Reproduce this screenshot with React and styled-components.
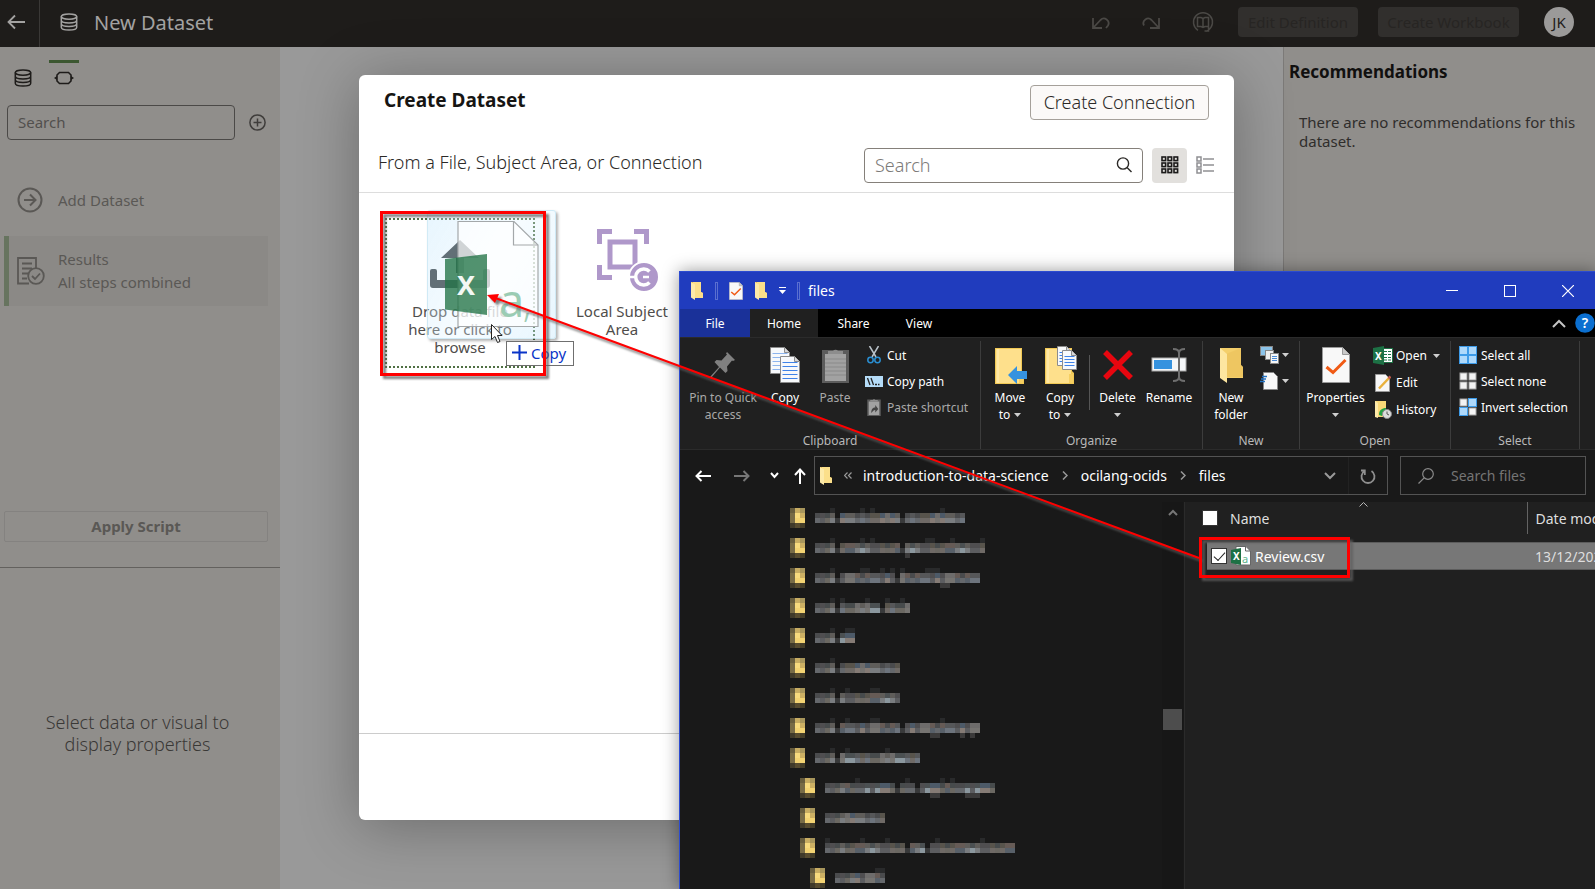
import React from 'react';
import styled, { createGlobalStyle, css } from 'styled-components';

const GlobalStyle = createGlobalStyle`
  *, *::before, *::after { box-sizing: border-box; }
  html, body, #root { height: 100%; margin: 0; }
  body {
    overflow: hidden;
    background: #999999;
    font-family: "Noto Sans", "Open Sans", sans-serif;
    font-weight: 400;
    font-size: 15px;
  }
  button, input { font: inherit; color: inherit; margin: 0; }
  button { padding: 0; border: 0; background: none; cursor: pointer; }
  svg { display: block; flex: none; }
  h1, h2, p, ul { margin: 0; padding: 0; }
`;

/* ---------- application shell ---------- */

const Screen = styled.div`
  position: relative;
  height: 100vh;
  display: flex;
  flex-direction: column;
  overflow: hidden;
`;

const TopBar = styled.header`
  height: 47px;
  flex: none;
  display: flex;
  align-items: center;
  padding-right: 21px;
  padding-bottom: 3px;
  background: #1e1c1a;
  color: #a3a2a1;
`;

const BackButton = styled.button`
  width: 40px;
  height: 47px;
  margin-bottom: -3px;
  padding: 0 0 3px 7px;
  border-right: 1px solid #3a3836;
`;

const TitleIcon = styled.span`
  padding-left: 20px;
`;

const PageTitle = styled.h1`
  flex: 1;
  margin-left: 16px;
  font-size: 20px;
  font-weight: 400;
`;

const TopTools = styled.div`
  display: flex;
  align-items: center;
  gap: 32px;
  margin-right: 24px;
  color: #4b4946;
`;

const TopButton = styled.button`
  width: ${(p) => p.$width}px;
  height: 30px;
  margin-right: ${(p) => p.$after}px;
  border-radius: 4px;
  background: #312f2d;
  color: #272523;
`;

const Avatar = styled.button`
  width: 30px;
  height: 30px;
  border-radius: 50%;
  background: #9b9a99;
  color: #1e1c1a;
`;

const Workspace = styled.div`
  flex: 1;
  display: flex;
  justify-content: space-between;
  min-height: 0;
`;

const LeftPanel = styled.aside`
  width: 280px;
  display: flex;
  flex-direction: column;
  background: #908e8b;
  color: #5a5855;
`;

const ScriptPane = styled.section`
  height: 521px;
  display: flex;
  flex-direction: column;
  border-bottom: 1px solid #63615e;
`;

const PanelTabs = styled.div`
  display: flex;
  gap: 11px;
  height: 48px;
  padding: 13px 0 0 8px;
  color: #1e1c1a;
`;

const PanelTab = styled.button`
  width: 30px;
  height: 35px;
  display: flex;
  align-items: flex-start;
  justify-content: center;
  padding-top: 6px;
  border-top: 3px solid ${(p) => (p.$active ? '#3c5731' : 'transparent')};
`;

const PanelSearch = styled.div`
  display: flex;
  align-items: center;
  gap: 14px;
  padding: 10px 7px 0;
  color: #3f3d3b;
`;

const PanelInput = styled.input`
  width: 228px;
  height: 35px;
  padding: 0 10px 2px;
  border: 1px solid #4b4947;
  border-radius: 4px;
  background: transparent;
  outline: 0;
  &::placeholder { color: #52504e; opacity: 1; }
`;

const StepList = styled.div`
  flex: 1;
  display: flex;
  flex-direction: column;
  gap: 12px;
  padding: 36px 12px 0 4px;
`;

const Step = styled.button`
  display: flex;
  align-items: center;
  width: 100%;
  height: ${(p) => (p.$active ? 70 : 48)}px;
  border-left: 5px solid ${(p) => (p.$active ? '#67745f' : 'transparent')};
  background: ${(p) => (p.$active ? '#8b8986' : 'transparent')};
  text-align: left;
  line-height: 23px;
`;

const StepIcon = styled.span`
  width: 49px;
  padding-left: 8px;
`;

const ApplyButton = styled.button`
  height: 31px;
  margin: 0 12px 25px 4px;
  padding-bottom: 2px;
  border: 1px solid #848280;
  border-radius: 2px;
  font-weight: 700;
`;

const EmptyProperties = styled.section`
  flex: 1;
  padding: 143px 35px 0 30px;
  color: #3a3836;
  font-size: 18px;
  font-weight: 300;
  line-height: 22px;
  text-align: center;
`;

const RightPanel = styled.aside`
  width: 312px;
  padding: 12px 16px 0 5px;
  border-left: 1px solid #7c7a78;
  background: #908e8b;
`;

const PanelHeading = styled.h2`
  font-size: 17px;
  font-weight: 700;
  line-height: 26px;
  color: #11100f;
`;

const PanelText = styled.p`
  margin: 28px 0 0 10px;
  line-height: 19px;
  color: #2f2d2b;
`;

/* ---------- create dataset dialog ---------- */

const Overlay = styled.div`
  position: absolute;
  inset: 0;
  display: flex;
  padding: 75px 361px 69px 359px;
`;

const Dialog = styled.section`
  flex: 1;
  min-width: 0;
  display: flex;
  flex-direction: column;
  border-radius: 6px;
  background: #ffffff;
  color: #2b2927;
  box-shadow: 0 6px 60px rgba(0, 0, 0, 0.3);
`;

const DialogHeader = styled.header`
  display: flex;
  justify-content: space-between;
  padding: 10px 25px 0;
`;

const DialogTitle = styled.h2`
  font-size: 19px;
  font-weight: 700;
  line-height: 30px;
  color: #161513;
`;

const ConnectionButton = styled.button`
  width: 179px;
  height: 35px;
  padding-bottom: 2px;
  border: 1px solid #a5a09a;
  border-radius: 4px;
  background: #fbf9f8;
  font-size: 18px;
  font-weight: 300;
`;

const DialogBar = styled.div`
  display: flex;
  align-items: center;
  height: 73px;
  padding: 18px 12px 0 19px;
  border-bottom: 1px solid #dddddd;
  font-size: 18px;
  font-weight: 300;
`;

const DialogLabel = styled.p`
  flex: 1;
  padding-bottom: 6px;
`;

const SearchBox = styled.label`
  width: 279px;
  height: 35px;
  display: flex;
  align-items: center;
  margin-right: 9px;
  padding: 0 10px;
  border: 1px solid #85807a;
  border-radius: 4px;
`;

const BareInput = styled.input`
  flex: 1;
  min-width: 0;
  border: 0;
  padding: 0;
  outline: 0;
  background: transparent;
  &::placeholder { color: ${(p) => p.$hint}; opacity: 1; }
`;

const ViewButton = styled.button`
  width: 35px;
  height: 35px;
  display: flex;
  align-items: center;
  justify-content: center;
  border-radius: 4px;
  background: ${(p) => (p.$active ? '#e2e0dd' : 'transparent')};
`;

const Sources = styled.div`
  flex: 1;
  display: flex;
  align-items: flex-start;
  gap: 12px;
  padding: 25px 26px;
`;

const SourceTile = styled.button`
  width: 150px;
  height: 150px;
  display: flex;
  flex-direction: column;
  align-items: center;
  padding: 9px 18px 0;
  border: 2px ${(p) => (p.$drop ? 'dotted #4f7043' : 'solid transparent')};
  line-height: 18px;
  color: #4f4d4b;
`;

const TileIcon = styled.span`
  height: 73px;
`;

const DialogFooter = styled.footer`
  height: 87px;
  border-top: 1px solid #cccccc;
`;

/* ---------- file explorer window ---------- */

/* The window reaches a little past the right edge of the screen. */
const Explorer = styled.section`
  position: absolute;
  inset: 271px -2px 0 679px;
  display: flex;
  flex-direction: column;
  border: solid #2c4bd0;
  border-width: 1px 0 0 1px;
  background: #191919;
  color: #ffffff;
  font-size: 12px;
  box-shadow: 0 0 16px rgba(0, 0, 0, 0.4);
`;

const TitleBar = styled.header`
  height: 37px;
  display: flex;
  align-items: center;
  padding-left: 10px;
  background: #203cbe;
  font-size: 14px;
`;

const QuickIcons = styled.div`
  display: flex;
  align-items: center;
  gap: 11px;
  margin-right: 8px;
`;

const QuickRule = styled.span`
  width: 3px;
  height: 18px;
  border: 1px solid #5a6fd0;
`;

const WindowTitle = styled.span`
  flex: 1;
`;

const WindowButton = styled.button`
  width: 58px;
  height: 37px;
  display: flex;
  align-items: center;
  justify-content: center;
`;

const TabBar = styled.nav`
  height: 28px;
  display: flex;
  align-items: stretch;
  background: #000000;
`;

const RibbonTab = styled.button`
  width: ${(p) => p.$width}px;
  background: ${(p) => p.$fill || 'transparent'};
`;

const TabTools = styled.div`
  flex: 1;
  display: flex;
  align-items: center;
  justify-content: flex-end;
  gap: 9px;
  padding-right: 2px;
`;

const Ribbon = styled.div`
  height: 113px;
  display: flex;
  padding-top: 3px;
  border-top: 1px solid #2b2b2b;
  border-bottom: 1px solid #2b2b2b;
  background: #202020;
`;

const RibbonGroup = styled.section`
  width: ${(p) => p.$width}px;
  display: flex;
  flex-direction: column;
  border-right: 1px solid #3c3c3c;
`;

const GroupTools = styled.div`
  height: 92px;
  display: flex;
  align-items: flex-start;
  padding-left: ${(p) => p.$inset}px;
`;

const GroupName = styled.span`
  text-align: center;
  line-height: 16px;
  color: #b9b9b9;
`;

const BigTool = styled.button`
  width: ${(p) => p.$width}px;
  display: flex;
  flex-direction: column;
  align-items: center;
  gap: 4px;
  padding-top: 4px;
  line-height: 17px;
  white-space: nowrap;
  color: ${(p) => (p.$dim ? '#a9a9a9' : '#ffffff')};
`;

const BigIcon = styled.span`
  height: 40px;
  display: flex;
  align-items: center;
`;

const ToolLine = styled.span`
  display: flex;
  align-items: center;
  justify-content: center;
  gap: 4px;
  min-height: 17px;
`;

const ToolRule = styled.span`
  width: 1px;
  height: 55px;
  margin: 14px 1px 0 4px;
  background: #555555;
`;

const SmallTools = styled.div`
  display: flex;
  flex-direction: column;
  padding-top: 1px;
`;

const SmallTool = styled.button`
  height: ${(p) => p.$height || 26}px;
  display: flex;
  align-items: center;
  gap: 3px;
  padding-left: 3px;
  white-space: nowrap;
  color: ${(p) => (p.$dim ? '#a9a9a9' : '#ffffff')};
`;

const SmallIcon = styled.span`
  width: 20px;
  display: flex;
  justify-content: center;
`;

const CaretGap = styled.span`
  padding-left: 3px;
`;

const AddressRow = styled.div`
  height: 52px;
  display: flex;
  align-items: center;
  padding: 0 11px 1px 15px;
  font-size: 14px;
`;

const NavButtons = styled.div`
  width: 119px;
  display: flex;
  align-items: center;
  gap: 20px;
  padding-right: 10px;
`;

const NavPair = styled.div`
  display: flex;
  align-items: center;
  gap: ${(p) => p.$gap}px;
`;

const AddressBox = styled.div`
  flex: 1;
  min-width: 0;
  height: 39px;
  display: flex;
  align-items: center;
  margin-right: 12px;
  padding-left: 4px;
  border: 1px solid #535353;
`;

const Crumbs = styled.nav`
  flex: 1;
  min-width: 0;
  display: flex;
  align-items: center;
  gap: 11px;
`;

const CrumbMark = styled.span`
  padding: 0 2px;
`;

const RefreshButton = styled.button`
  width: 39px;
  height: 37px;
  display: flex;
  align-items: center;
  justify-content: center;
  margin-left: 12px;
  border-left: 1px solid #222222;
`;

const FileSearch = styled.label`
  width: 186px;
  height: 39px;
  display: flex;
  align-items: center;
  gap: 17px;
  padding: 0 17px;
  border: 1px solid #535353;
`;

const ExplorerBody = styled.div`
  flex: 1;
  min-height: 0;
  display: flex;
`;

const TreePane = styled.div`
  width: 505px;
  display: flex;
  border-right: 1px solid #2b2b2b;
`;

const Tree = styled.ul`
  flex: 1;
  min-width: 0;
  overflow: hidden;
  padding: 6px 0 0 110px;
  list-style: none;
`;

const TreeItem = styled.li`
  height: 30px;
  display: flex;
  gap: 10px;
  padding-left: ${(p) => p.$depth * 10}px;
`;

const ScrollTrack = styled.div`
  width: 21px;
  display: flex;
  flex-direction: column;
  align-items: center;
  margin-right: 1px;
  padding-top: 7px;
  background: #171717;
`;

const ScrollThumb = styled.div`
  width: 19px;
  height: 21px;
  margin-top: 193px;
  background: #4d4d4d;
`;

const FilesPane = styled.div`
  flex: 1;
  min-width: 0;
  overflow: hidden;
  padding-left: 16px;
  background: #202020;
`;

const FileTable = styled.table`
  width: 520px;
  table-layout: fixed;
  border-collapse: collapse;
  font-size: 14px;
`;

const HeadCell = styled.th`
  width: ${(p) => p.$width}px;
  height: 32px;
  padding: 0 0 0 ${(p) => p.$indent}px;
  border-right: 1px solid #636363;
  font-weight: 400;
  text-align: left;
  color: #dedede;
`;

const HeadLine = styled.div`
  height: 32px;
  display: flex;
  align-items: center;
  gap: 12px;
`;

const SortMark = styled.span`
  align-self: flex-start;
  margin-left: 78px;
`;

const FileCell = styled.td`
  padding: 8px 0 0 ${(p) => p.$indent || 0}px;
`;

const FileLine = styled.div`
  height: 28px;
  display: flex;
  align-items: center;
  gap: 4px;
  padding-left: ${(p) => p.$pad}px;
  border: solid #5c5c5c;
  border-width: 1px 0;
  background: #777777;
  color: ${(p) => p.$ink};
`;

const Check = styled.input`
  appearance: none;
  width: 16px;
  height: 16px;
  flex: none;
  border: 1px solid #333333;
  background: #ffffff;
  ${(p) =>
    p.checked &&
    css`
      display: grid;
      place-items: center;
      &::after {
        content: '';
        width: 11px;
        height: 6px;
        margin-top: -3px;
        border: solid #222222;
        border-width: 0 0 1px 1px;
        transform: rotate(-48deg);
      }
    `}
`;

/* ---------- dragged file and annotations ---------- */

const DragGhost = styled.div`
  position: absolute;
  left: 427px;
  top: 210px;
  width: 129px;
  height: 129px;
  border: 1px solid rgba(190, 225, 240, 0.6);
  border-radius: 3px;
  background: linear-gradient(120deg, rgba(188, 228, 252, 0.35), rgba(225, 244, 255, 0.3) 50%, rgba(188, 228, 252, 0.35));
  box-shadow: 2px 2px 3px rgba(0, 0, 0, 0.3);
`;

const DropHint = styled.div`
  position: absolute;
  left: 506px;
  top: 341px;
  width: 68px;
  height: 25px;
  display: flex;
  align-items: center;
  gap: 4px;
  padding: 0 0 2px 5px;
  border: 1px solid #6f6f6f;
  background: #ffffff;
  color: #0a35c8;
`;

const Pointer = styled.svg`
  position: absolute;
  left: 490px;
  top: 323px;
`;

const Annotations = styled.svg`
  position: absolute;
  left: 0;
  top: 0;
  pointer-events: none;
  filter: drop-shadow(3px 3px 1px rgba(95, 95, 95, 0.8));
`;

/* ---------- icons ---------- */

const Icon = ({ w = 16, h, box, children, ...rest }) => (
  <svg
    width={w}
    height={h || w}
    viewBox={box || `0 0 ${w} ${h || w}`}
    fill="none"
    stroke="currentColor"
    strokeWidth="1.5"
    aria-hidden="true"
    {...rest}
  >
    {children}
  </svg>
);

const DatabaseIcon = () => (
  <Icon w={18}>
    <ellipse cx="9" cy="3.6" rx="7.7" ry="2.7" />
    <path d="M1.3 3.6v10.6c0 1.6 3.4 2.8 7.7 2.8s7.7-1.2 7.7-2.8V3.6M1.3 7.2c0 1.6 3.4 2.7 7.7 2.7s7.7-1.1 7.7-2.7M1.3 10.8c0 1.6 3.4 2.7 7.7 2.7s7.7-1.1 7.7-2.7" />
  </Icon>
);

const Caret = () => (
  <Icon w={7} h={4} stroke="none" fill="#cfcfcf">
    <path d="M0 0h7L3.5 4z" />
  </Icon>
);

const Chevron = () => (
  <CrumbMark>
    <Icon w={6} h={9} stroke="#9a9a9a"><path d="M1 .5l4 4-4 4" /></Icon>
  </CrumbMark>
);

const FolderIcon = ({ w = 14, h = 18 }) => (
  <Icon w={w} h={h} box="0 0 14 18" stroke="none">
    <path d="M1 0h10v10l2 1v5H3z" fill="#e9bf5a" />
    <path d="M3 0h8v10l2 1v5H4z" fill="#fbdf8a" />
    <path d="M1 0l4 2.6V18l-4-2.5z" fill="#fdeaa9" />
  </Icon>
);

const NewFolderIcon = () => (
  <Icon w={26} h={36} stroke="none">
    <path d="M2 1h21v17l2 2v11H8z" fill="#f4cf6b" />
    <path d="M8 7l15-6v17l2 2v10H8z" fill="#e9c05a" opacity=".55" />
    <path d="M2 1l7 6v29l-7-5z" fill="#fde6a0" />
  </Icon>
);

const BigFolder = ({ children }) => (
  <Icon w={36} h={38} stroke="none">
    <path d="M3 2h27v23l2 2v11H3z" fill="#f1c955" />
    <path d="M4 3h25v34H4z" fill="#fee08c" />
    <path d="M27 28h4v9h-4z" fill="#f6cf62" />
    <path d="M6 3v34" stroke="#ffeebb" strokeWidth="1" />
    {children}
  </Icon>
);

const DocLines = ({ x, y, w, h, gap = 4, tone = '#3f83e8' }) => {
  const rows = [];
  for (let i = y + 6; i < y + h - 2; i += gap) rows.push(i);
  return (
    <g>
      <path
        d={`M${x + 0.5} ${y + 0.5}h${w - 6}l5 5v${h - 6}h-${w - 1}z`}
        fill="#f7f9fb"
        stroke="#8c8c8c"
        strokeWidth="1"
      />
      <path d={`M${x + w - 5.5} ${y + 0.5}v5h5`} fill="#d7d7d7" stroke="#8c8c8c" strokeWidth="1" />
      {rows.map((r) => (
        <path key={r} d={`M${x + 2.5} ${r + 0.5}h${w - 5}`} stroke={tone} strokeWidth="1" />
      ))}
    </g>
  );
};

const CheckPage = ({ w = 28, h = 36 }) => (
  <Icon w={w} h={h} box="0 0 28 36">
    <path d="M.5.5h20l7 7v28H.5z" fill="#f8f8f8" stroke="#999" strokeWidth="1" />
    <path d="M20.5.5v7h7" fill="#c9c9c9" stroke="#999" strokeWidth="1" />
    <path d="M4.5 20l6.5 5.5L23.5 13" stroke="#f05a14" strokeWidth="3" />
  </Icon>
);

const Clipboard = ({ w, h, children }) => (
  <Icon w={w} h={h} box="0 0 27 36" stroke="none">
    <rect x="0" y="3" width="27" height="33" fill="#5c5c5c" />
    <rect x="3" y="7" width="21" height="27" fill="#a2a2a2" />
    <path d="M6 7V4h5a3 3 0 0 1 5 0h5v3z" fill="#8d8d8d" />
    {children || <path d="M3 12h21M3 16h21M3 20h21M3 24h21M3 28h21" stroke="#8a8a8a" strokeWidth="1" />}
  </Icon>
);

const SelectIcon = ({ cells }) => (
  <Icon w={18} stroke="none">
    {cells.map((on, i) => {
      const x = (i % 2) * 9;
      const y = i > 1 ? 9 : 0;
      return (
        <g key={i}>
          {on === 1 && <rect x={x} y={y} width="9" height="9" fill="#3d9be8" />}
          <rect
            x={x + 1}
            y={y + 1}
            width="7"
            height="7"
            fill={on ? '#aed9fb' : '#f3f3f3'}
            stroke={on ? 'none' : '#a5a5a5'}
            strokeWidth="1"
          />
        </g>
      );
    })}
  </Icon>
);

const CsvIcon = () => (
  <Icon w={20} stroke="none">
    <path d="M5 .5h10l4.500 4.500v14H5z" fill="#fff" stroke="#666" strokeWidth="1" />
    <path d="M14.500.5V5H19" fill="none" stroke="#666" strokeWidth="1" />
    <text x="11" y="17" fontSize="11" fontWeight="400" fill="#5db58c">a</text>
    <path d="M0 4l10-2v17L0 17z" fill="#1d7145" />
    <text x="2" y="14" fontSize="10" fontWeight="700" fill="#fff">X</text>
  </Icon>
);

/* ---------- pixelated folder names in the tree ---------- */

const folderCells = [
  ['#655b3d', '#c8ad63', '#a8965c'],
  ['#786b46', '#f7da7e', '#ccb063'],
  ['#786b46', '#f3d373', '#f3d373'],
  ['#403a2a', '#574b2f', '#443d29'],
];

const upperTones = ['#4a4b4d', '#4f4e50', '#474b4c', '#5f5d5a', '#565759', '#4d5a68', '#665b56', '#4b5052', '#58544c', '#6e6c6b'];
const lowerTones = ['#65686c', '#5c5d60', '#6b6862', '#7a7d80', '#6d747d', '#857b75', '#586069', '#8b979e', '#6f6a66', '#767471'];

const treeRows = [
  { depth: 0, length: 30, up: [3, 9, 11, 25], down: [], gap: [4, 17] },
  { depth: 0, length: 34, up: [3, 9, 11, 22, 23, 27, 33], down: [18], gap: [4, 17] },
  { depth: 0, length: 33, up: [3, 9, 10, 13, 15, 17, 22, 23, 24], down: [25, 26], gap: [4, 16] },
  { depth: 0, length: 19, up: [3, 5, 10, 14, 17], down: [], gap: [4, 13] },
  { depth: 0, length: 8, up: [3, 6, 7], down: [], gap: [4] },
  { depth: 0, length: 17, up: [3], down: [], gap: [4] },
  { depth: 0, length: 17, up: [3, 6, 11, 12], down: [], gap: [4] },
  { depth: 0, length: 33, up: [3, 6, 11, 12, 25], down: [23, 24, 29, 31], gap: [4, 17] },
  { depth: 0, length: 21, up: [3, 6, 14], down: [], gap: [4] },
  { depth: 1, length: 34, up: [6, 16, 23, 25], down: [21, 22, 28, 29, 30], gap: [14, 18] },
  { depth: 1, length: 12, up: [], down: [], gap: [] },
  { depth: 1, length: 38, up: [0, 7, 12, 22, 31], down: [], gap: [16, 20] },
  { depth: 2, length: 10, up: [8, 9], down: [], gap: [] },
];

const PixelFolder = () => (
  <Icon w={15} h={20} stroke="none" shapeRendering="crispEdges">
    {folderCells.map((row, y) =>
      row.map((fill, x) => <rect key={`${x}-${y}`} x={x * 5} y={y * 5} width="5" height="5" fill={fill} />)
    )}
  </Icon>
);

const PixelName = ({ row, seed }) => {
  const cells = [];
  const put = (x, y, fill) =>
    cells.push(<rect key={`${x}-${y}`} x={x * 5} y={y * 5} width="5" height="5" fill={fill} />);
  for (let x = 0; x < row.length; x += 1) {
    const mix = x < 4 ? x : (x * 7 + seed * 3 + ((x * x) % 5)) % 10;
    if (row.gap.includes(x)) {
      put(x, 2, '#38393a');
    } else {
      put(x, 1, upperTones[mix]);
      put(x, 2, lowerTones[mix]);
    }
  }
  row.up.forEach((x) => put(x, 0, '#292a2b'));
  row.down.forEach((x) => put(x, 3, '#3b3a3a'));
  return (
    <Icon w={row.length * 5} h={20} stroke="none" shapeRendering="crispEdges">
      {cells}
    </Icon>
  );
};

/* ---------- sections ---------- */

const TopHeader = () => (
  <TopBar>
    <BackButton aria-label="Back">
      <Icon w={18} strokeWidth="1.8"><path d="M18 9H1.5M8 2.5L1.5 9 8 15.5" /></Icon>
    </BackButton>
    <TitleIcon><DatabaseIcon /></TitleIcon>
    <PageTitle>New Dataset</PageTitle>
    <TopTools>
      <button aria-label="Undo">
        <Icon w={18} strokeWidth="1.8"><path d="M1 5v10h9M1.500 14.500L8.500 7a4.700 4.700 0 0 1 7.500 5.500l-2 2.500" /></Icon>
      </button>
      <button aria-label="Redo">
        <Icon w={18} strokeWidth="1.8"><path d="M17 5v10H8M16.500 14.500L9.500 7a4.700 4.700 0 0 0-7.500 5.500" /></Icon>
      </button>
      <button aria-label="Data dictionary">
        <Icon w={22}>
          <path d="M6 19.300A9.500 9.500 0 1 1 16 19.300l-2 1M16.500 16v4h-4" />
          <path d="M5.500 6.500H9l2 1 2-1h3.500v9H13l-2 1-2-1H5.500zM11 7.500v9" />
        </Icon>
      </button>
    </TopTools>
    <TopButton $width={120} $after={20} disabled>Edit Definition</TopButton>
    <TopButton $width={141} $after={25} disabled>Create Workbook</TopButton>
    <Avatar>JK</Avatar>
  </TopBar>
);

const SideBar = () => (
  <LeftPanel>
    <ScriptPane>
      <PanelTabs>
        <PanelTab aria-label="Data"><DatabaseIcon /></PanelTab>
        <PanelTab aria-label="Steps" $active>
          <Icon w={20} h={18}>
            <path d="M5.500 3.500h9l2.500 2.500v6l-2.500 2.500h-9L3 12V6z" strokeWidth="1.600" />
            <path d="M0 9l3-2v4zM20 9l-3-2v4z" fill="currentColor" stroke="none" />
          </Icon>
        </PanelTab>
      </PanelTabs>
      <PanelSearch>
        <PanelInput type="text" placeholder="Search" aria-label="Search steps" />
        <button aria-label="Add step">
          <Icon w={17}><circle cx="8.500" cy="8.500" r="7.600" /><path d="M8.500 4.500v8M4.500 8.500h8" /></Icon>
        </button>
      </PanelSearch>
      <StepList>
        <Step>
          <StepIcon>
            <Icon w={26} strokeWidth="2"><circle cx="13" cy="13" r="11.500" /><path d="M7 13h11M13 7.500l5.500 5.500-5.500 5.500" /></Icon>
          </StepIcon>
          Add Dataset
        </Step>
        <Step $active>
          <StepIcon>
            <Icon w={28} strokeWidth="1.8">
              <path d="M12 26.500H1V1h18v10M5 6.500h10M5 11.500h10M5 16.500h6M5 21.500h5" />
              <circle cx="19" cy="19" r="7.800" />
              <path d="M15 19l3 3 5-5.500" />
            </Icon>
          </StepIcon>
          <span>Results<br />All steps combined</span>
        </Step>
      </StepList>
      <ApplyButton>Apply Script</ApplyButton>
    </ScriptPane>
    <EmptyProperties>Select data or visual to display properties</EmptyProperties>
  </LeftPanel>
);

const CreateDataset = () => (
  <Overlay>
    <Dialog role="dialog" aria-label="Create Dataset">
      <DialogHeader>
        <DialogTitle>Create Dataset</DialogTitle>
        <ConnectionButton>Create Connection</ConnectionButton>
      </DialogHeader>
      <DialogBar>
        <DialogLabel>From a File, Subject Area, or Connection</DialogLabel>
        <SearchBox>
          <BareInput type="text" placeholder="Search" aria-label="Search sources" $hint="#7c7a78" />
          <Icon w={16} strokeWidth="1.4"><circle cx="7" cy="6.500" r="5.600" /><path d="M11 10.500l4.500 4.500" /></Icon>
        </SearchBox>
        <ViewButton $active aria-label="Grid view">
          <Icon w={18} stroke="#1b1a19" strokeWidth="1.6">
            {[0, 6, 12].map((y) =>
              [0, 6, 12].map((x) => <rect key={`${x}-${y}`} x={x + 1} y={y + 1} width="3.600" height="3.600" />)
            )}
          </Icon>
        </ViewButton>
        <ViewButton aria-label="List view">
          <Icon w={18} stroke="#8f8f92">
            {[1, 7, 13].map((y) => (
              <g key={y}>
                <rect x="1" y={y} width="4" height="4" />
                <path d={`M7 ${y + 2}h11`} />
              </g>
            ))}
          </Icon>
        </ViewButton>
      </DialogBar>
      <Sources>
        <SourceTile $drop>
          <TileIcon>
            <Icon w={62} stroke="none" fill="#2f3436">
              <path d="M31 11L50 29H35v15h-8V29H12z" />
              <path d="M1 42q0-2 2-2h3q2 0 2 2v9h46v-9q0-2 2-2h3q2 0 2 2v14q0 3-3 3H4q-3 0-3-3z" />
            </Icon>
          </TileIcon>
          Drop data file here or click to browse
        </SourceTile>
        <SourceTile>
          <TileIcon>
            <Icon w={74} h={64} box="-12 0 74 64" stroke="#af98ca">
              <path d="M2.500 15V2.500H15M37 2.500h12.500V15M2.500 36v12.500H15" strokeWidth="5" />
              <rect x="13" y="13" width="25" height="25" strokeWidth="5" />
              <circle cx="47" cy="48" r="15" fill="#af98ca" stroke="#fff" strokeWidth="2" />
              <path d="M52.500 42.500a8 8 0 1 0 0 11" stroke="#fff" strokeWidth="3.500" />
              <path d="M33 48h7M46 48h6" stroke="#fff" strokeWidth="2.500" />
            </Icon>
          </TileIcon>
          Local Subject Area
        </SourceTile>
      </Sources>
      <DialogFooter />
    </Dialog>
  </Overlay>
);

const ExplorerRibbon = () => (
  <Ribbon>
    <RibbonGroup $width={301}>
      <GroupTools $inset={5}>
        <BigTool $width={76} $dim>
          <BigIcon>
            <Icon w={26} h={28} stroke="none" fill="#808080">
              <path d="M17 1l8 8-2 1-1-.5-5 6 .5 4.500-2 2-5.500-5.500L1 27l-1-1 9-10L4.500 11l2-2 5 .5 5.500-6-1-1z" />
            </Icon>
          </BigIcon>
          <span>Pin to Quick<br />access</span>
        </BigTool>
        <BigTool $width={48}>
          <BigIcon>
            <Icon w={30} h={36}><DocLines x={0} y={0} w={20} h={27} tone="#8db5ee" /><DocLines x={10} y={9} w={20} h={27} /></Icon>
          </BigIcon>
          Copy
        </BigTool>
        <BigTool $width={52} $dim>
          <BigIcon><Clipboard w={27} h={36} /></BigIcon>
          Paste
        </BigTool>
        <SmallTools>
          <SmallTool>
            <SmallIcon>
              <Icon w={14} h={18}>
                <path d="M2.500 0L9 11M11.500 0L5 11" stroke="#b9c2c9" />
                <circle cx="3.500" cy="14" r="2.700" stroke="#2a8fd2" />
                <circle cx="10.500" cy="14" r="2.700" stroke="#2a8fd2" />
              </Icon>
            </SmallIcon>
            Cut
          </SmallTool>
          <SmallTool>
            <SmallIcon>
              <Icon w={18} h={11} stroke="none">
                <rect width="18" height="11" fill="#b5dcf8" />
                <path d="M2.500 2l2.500 7M6 2l2.500 7M10 8.500h2M13 8.500h1.500" stroke="#222" strokeWidth="1.300" />
              </Icon>
            </SmallIcon>
            Copy path
          </SmallTool>
          <SmallTool $dim>
            <SmallIcon>
              <Clipboard w={14} h={18}><path d="M8 30c0-8 3-11 8-11v-5l6 8-6 7v-5c-4 0-5 3-8 6z" fill="#444" /></Clipboard>
            </SmallIcon>
            Paste shortcut
          </SmallTool>
        </SmallTools>
      </GroupTools>
      <GroupName>Clipboard</GroupName>
    </RibbonGroup>
    <RibbonGroup $width={222}>
      <GroupTools $inset={4}>
        <BigTool $width={50}>
          <BigIcon><BigFolder><path d="M16 29l9-9v5h10v8H25v5z" fill="#3592df" /></BigFolder></BigIcon>
          <span>Move<ToolLine>to <Caret /></ToolLine></span>
        </BigTool>
        <BigTool $width={50}>
          <BigIcon>
            <BigFolder><DocLines x={15} y={0} w={15} h={20} gap={3} /><DocLines x={20} y={4} w={15} h={20} gap={3} /></BigFolder>
          </BigIcon>
          <span>Copy<ToolLine>to <Caret /></ToolLine></span>
        </BigTool>
        <ToolRule />
        <BigTool $width={53}>
          <BigIcon><Icon w={30} h={32}><path d="M2 3l26 26M28 3L2 29" stroke="#e8060f" strokeWidth="5.500" /></Icon></BigIcon>
          <span>Delete<ToolLine><Caret /></ToolLine></span>
        </BigTool>
        <BigTool $width={50}>
          <BigIcon>
            <Icon w={36} h={34}>
              <rect x="1" y="10" width="34" height="13" fill="#f4f6f8" stroke="#a9a9a9" strokeWidth="1" />
              <rect x="3" y="12" width="18" height="9" fill="#3592df" stroke="none" />
              <path d="M22 1q6 0 6 4v24q0 4-6 4M34 1q-6 0-6 4v24q0 4 6 4" stroke="#6e6e6e" strokeWidth="2" />
            </Icon>
          </BigIcon>
          Rename
        </BigTool>
      </GroupTools>
      <GroupName>Organize</GroupName>
    </RibbonGroup>
    <RibbonGroup $width={97}>
      <GroupTools $inset={2}>
        <BigTool $width={52}>
          <BigIcon><NewFolderIcon /></BigIcon>
          <span>New<br />folder</span>
        </BigTool>
        <SmallTools>
          <SmallTool aria-label="New item">
            <Icon w={19} h={18} stroke="#888" strokeWidth="1">
              <rect x=".5" y=".5" width="12" height="9" fill="#8cc4ea" />
              <rect x="5.500" y="4.500" width="8" height="9" fill="#eee" />
              <rect x="10.500" y="7.500" width="8" height="10" fill="#f7f7f7" />
              <path d="M12 10.500h5M12 12.500h5M12 14.500h5" stroke="#4a8ad4" />
            </Icon>
            <Caret />
          </SmallTool>
          <SmallTool aria-label="Easy access">
            <Icon w={19} h={18} stroke="#888" strokeWidth="1">
              <path d="M3.500.5h10l4 4v13h-14z" fill="#f7f7f7" />
              <path d="M2 4.500h5M1 7h5M0 9.500h5" stroke="#2272c3" strokeWidth="1.500" />
            </Icon>
            <Caret />
          </SmallTool>
        </SmallTools>
      </GroupTools>
      <GroupName>New</GroupName>
    </RibbonGroup>
    <RibbonGroup $width={151}>
      <GroupTools $inset={1}>
        <BigTool $width={69}>
          <BigIcon><CheckPage /></BigIcon>
          <span>Properties<ToolLine><Caret /></ToolLine></span>
        </BigTool>
        <SmallTools>
          <SmallTool $height={27}>
            <SmallIcon>
              <Icon w={20} h={19} stroke="none">
                <rect x="9" y="2.500" width="10.500" height="14" fill="#fff" stroke="#1d7145" strokeWidth="1" />
                <path d="M11 5.500h3M15 5.500h3M11 8.500h3M15 8.500h3M11 11.500h3M15 11.500h3M11 14h3M15 14h3" stroke="#1d7145" strokeWidth="1.200" />
                <path d="M0 2l11-2v19L0 17z" fill="#1d7145" />
                <text x="2" y="13.500" fontSize="10" fontWeight="700" fill="#fff">X</text>
              </Icon>
            </SmallIcon>
            Open <CaretGap><Caret /></CaretGap>
          </SmallTool>
          <SmallTool $height={27}>
            <SmallIcon>
              <Icon w={16} h={18} stroke="#999" strokeWidth="1">
                <path d="M.5.500h10l4 4v13H.5z" fill="#f7f7f7" />
                <path d="M4 14.500L14.500 3.500" stroke="#e9b13c" strokeWidth="2.500" />
                <path d="M13.500 4.500l2-2" stroke="#c65a4d" strokeWidth="2.500" />
              </Icon>
            </SmallIcon>
            Edit
          </SmallTool>
          <SmallTool $height={27}>
            <SmallIcon>
              <Icon w={18} stroke="none">
                <path d="M1 0h11v16H1z" fill="#f8d877" />
                <path d="M1 0l3 2v15l-3-1z" fill="#fdeaa9" />
                <path d="M5 14c0-5 3-7 7-7v3c-2 0-4 2-4 5z" fill="#25a244" />
                <circle cx="13" cy="13" r="4.500" fill="#dcdcdc" stroke="#888" strokeWidth="1" />
                <path d="M13 10.500V13l2 1" stroke="#555" strokeWidth="1" />
              </Icon>
            </SmallIcon>
            History
          </SmallTool>
        </SmallTools>
      </GroupTools>
      <GroupName>Open</GroupName>
    </RibbonGroup>
    <RibbonGroup $width={129}>
      <GroupTools $inset={4}>
        <SmallTools>
          <SmallTool><SmallIcon><SelectIcon cells={[1, 1, 1, 1]} /></SmallIcon>Select all</SmallTool>
          <SmallTool><SmallIcon><SelectIcon cells={[0, 0, 0, 0]} /></SmallIcon>Select none</SmallTool>
          <SmallTool><SmallIcon><SelectIcon cells={[0, 1, 1, 0]} /></SmallIcon>Invert selection</SmallTool>
        </SmallTools>
      </GroupTools>
      <GroupName>Select</GroupName>
    </RibbonGroup>
  </Ribbon>
);

const FileExplorer = () => (
  <Explorer aria-label="File explorer">
    <TitleBar>
      <QuickIcons>
        <FolderIcon />
        <QuickRule />
        <CheckPage w={14} h={18} />
        <FolderIcon />
        <Icon w={7} h={8} stroke="none" fill="#fff"><path d="M0 0h7v1H0zM0 3h7L3.500 7z" /></Icon>
        <QuickRule />
      </QuickIcons>
      <WindowTitle>files</WindowTitle>
      <WindowButton aria-label="Minimize"><Icon w={12} strokeWidth="1"><path d="M0 5.500h12" /></Icon></WindowButton>
      <WindowButton aria-label="Maximize"><Icon w={12} strokeWidth="1"><rect x=".5" y=".5" width="11" height="11" /></Icon></WindowButton>
      <WindowButton aria-label="Close"><Icon w={12} strokeWidth="1.2"><path d="M0 0l12 12M12 0L0 12" /></Icon></WindowButton>
    </TitleBar>
    <TabBar>
      <RibbonTab $width={70} $fill="#1a3199">File</RibbonTab>
      <RibbonTab $width={68} $fill="#202020">Home</RibbonTab>
      <RibbonTab $width={71}>Share</RibbonTab>
      <RibbonTab $width={60}>View</RibbonTab>
      <TabTools>
        <button aria-label="Collapse ribbon">
          <Icon w={14} h={9} stroke="#c4c4c4" strokeWidth="2"><path d="M1 8l6-6 6 6" /></Icon>
        </button>
        <button aria-label="Help">
          <Icon w={20} stroke="none">
            <circle cx="10" cy="10" r="9.800" fill="#0b6fd0" />
            <text x="10" y="15" fontSize="14" fontWeight="600" fill="#fff" textAnchor="middle">?</text>
          </Icon>
        </button>
      </TabTools>
    </TabBar>
    <ExplorerRibbon />
    <AddressRow>
      <NavButtons>
        <NavPair $gap={23}>
          <button aria-label="Back"><Icon w={16} h={12} strokeWidth="2"><path d="M16 6H1M6.500 1L1.500 6l5 5" /></Icon></button>
          <button aria-label="Forward"><Icon w={16} h={12} stroke="#777" strokeWidth="2"><path d="M0 6h15M9.500 1l5 5-5 5" /></Icon></button>
        </NavPair>
        <NavPair $gap={15}>
          <button aria-label="Recent"><Icon w={9} h={7} strokeWidth="2"><path d="M1 1l3.500 4L8 1" /></Icon></button>
          <button aria-label="Up"><Icon w={12} h={16} strokeWidth="2"><path d="M6 16V2M1 7l5-5.500L11 7" /></Icon></button>
        </NavPair>
      </NavButtons>
      <AddressBox>
        <Crumbs aria-label="Path">
          <FolderIcon />
          <Icon w={8} h={7} stroke="#9a9a9a" strokeWidth="1.2"><path d="M3.500.5l-3 3 3 3M7.500.5l-3 3 3 3" /></Icon>
          <button>introduction-to-data-science</button>
          <Chevron />
          <button>ocilang-ocids</button>
          <Chevron />
          <button>files</button>
        </Crumbs>
        <button aria-label="Previous locations">
          <Icon w={12} h={8} stroke="#9a9a9a" strokeWidth="2"><path d="M1 1l5 5 5-5" /></Icon>
        </button>
        <RefreshButton aria-label="Refresh">
          <Icon w={16} stroke="#8f8f8f" strokeWidth="1.8"><path d="M4.500 3A6.500 6.500 0 1 0 11.500 3M4.800 7V2.500H1" /></Icon>
        </RefreshButton>
      </AddressBox>
      <FileSearch>
        <Icon w={16} stroke="#8a8a8a" strokeWidth="1.2"><circle cx="10" cy="6" r="5.300" /><path d="M6.200 9.800L.5 15.500" /></Icon>
        <BareInput type="text" placeholder="Search files" aria-label="Search files" $hint="#757575" />
      </FileSearch>
    </AddressRow>
    <ExplorerBody>
      <TreePane>
        <Tree aria-label="Folders">
          {treeRows.map((row, i) => (
            <TreeItem key={i} $depth={row.depth}>
              <PixelFolder />
              <PixelName row={row} seed={i} />
            </TreeItem>
          ))}
        </Tree>
        <ScrollTrack>
          <Icon w={10} h={7} stroke="#777" strokeWidth="2"><path d="M1 6l4-4 4 4" /></Icon>
          <ScrollThumb />
        </ScrollTrack>
      </TreePane>
      <FilesPane>
        <FileTable>
          <thead>
            <tr>
              <HeadCell $width={326} $indent={1}>
                <HeadLine>
                  <Check type="checkbox" checked={false} readOnly aria-label="Select all files" />
                  Name
                  <SortMark><Icon w={9} h={5} stroke="#b5b5b5" strokeWidth="1"><path d="M.5 4.500l4-4 4 4" /></Icon></SortMark>
                </HeadLine>
              </HeadCell>
              <HeadCell $width={194} $indent={8}>Date modified</HeadCell>
            </tr>
          </thead>
          <tbody>
            <tr>
              <FileCell $indent={6}>
                <FileLine $pad={4} $ink="#ffffff">
                  <Check type="checkbox" checked readOnly aria-label="Select Review.csv" />
                  <CsvIcon />
                  Review.csv
                </FileLine>
              </FileCell>
              <FileCell>
                <FileLine $pad={8} $ink="#dedede">13/12/2022</FileLine>
              </FileCell>
            </tr>
          </tbody>
        </FileTable>
      </FilesPane>
    </ExplorerBody>
  </Explorer>
);

const DraggedFile = () => (
  <>
    <DragGhost>
      <Icon w={127} box="1 1 127 127" stroke="none">
        <path d="M31 11.500h56l24 23.500v81.500H31z" fill="#fff" fillOpacity=".7" stroke="#a4a8aa" strokeWidth="1.200" />
        <path d="M86.500 11.500V35h24.500" stroke="#a4a8aa" strokeWidth="1.200" />
        <text x="72" y="107" fontSize="45" fontWeight="400" fill="#9bccb4">a</text>
        <text x="96" y="107" fontSize="36" fontWeight="300" fill="#9bccb4">,</text>
        <path d="M18 49L60 44v61L18 99.500z" fill="#217346" fillOpacity=".78" />
        <text x="39" y="85" fontSize="27" fontWeight="700" fill="#f3f8f5" textAnchor="middle">X</text>
      </Icon>
    </DragGhost>
    <DropHint>
      <Icon w={15} stroke="#0a35c8" strokeWidth="2"><path d="M7.500 0v15M0 7.500h15" /></Icon>
      Copy
    </DropHint>
    <Pointer width="14" height="21" viewBox="0 0 14 21" aria-hidden="true">
      <path d="M1.500 1.500v15l3.500-3 2.500 6 2.500-1-2.500-6h4.500z" fill="#fff" stroke="#222" strokeWidth="1" />
    </Pointer>
  </>
);

export default function App() {
  return (
    <Screen>
      <GlobalStyle />
      <TopHeader />
      <Workspace>
        <SideBar />
        <RightPanel>
          <PanelHeading>Recommendations</PanelHeading>
          <PanelText>There are no recommendations for this dataset.</PanelText>
        </RightPanel>
      </Workspace>
      <CreateDataset />
      <FileExplorer />
      <DraggedFile />
      <Annotations width="1400" height="620" fill="none" stroke="#ff0000" aria-hidden="true">
        <rect x="381.500" y="212.500" width="163" height="162" strokeWidth="3" />
        <rect x="1200.500" y="538.500" width="148" height="38" strokeWidth="3" />
        <path d="M1199 558L494 297.500" strokeWidth="2" />
        <path d="M487 295l12-1-4 9z" fill="#ff0000" stroke="none" />
      </Annotations>
    </Screen>
  );
}
